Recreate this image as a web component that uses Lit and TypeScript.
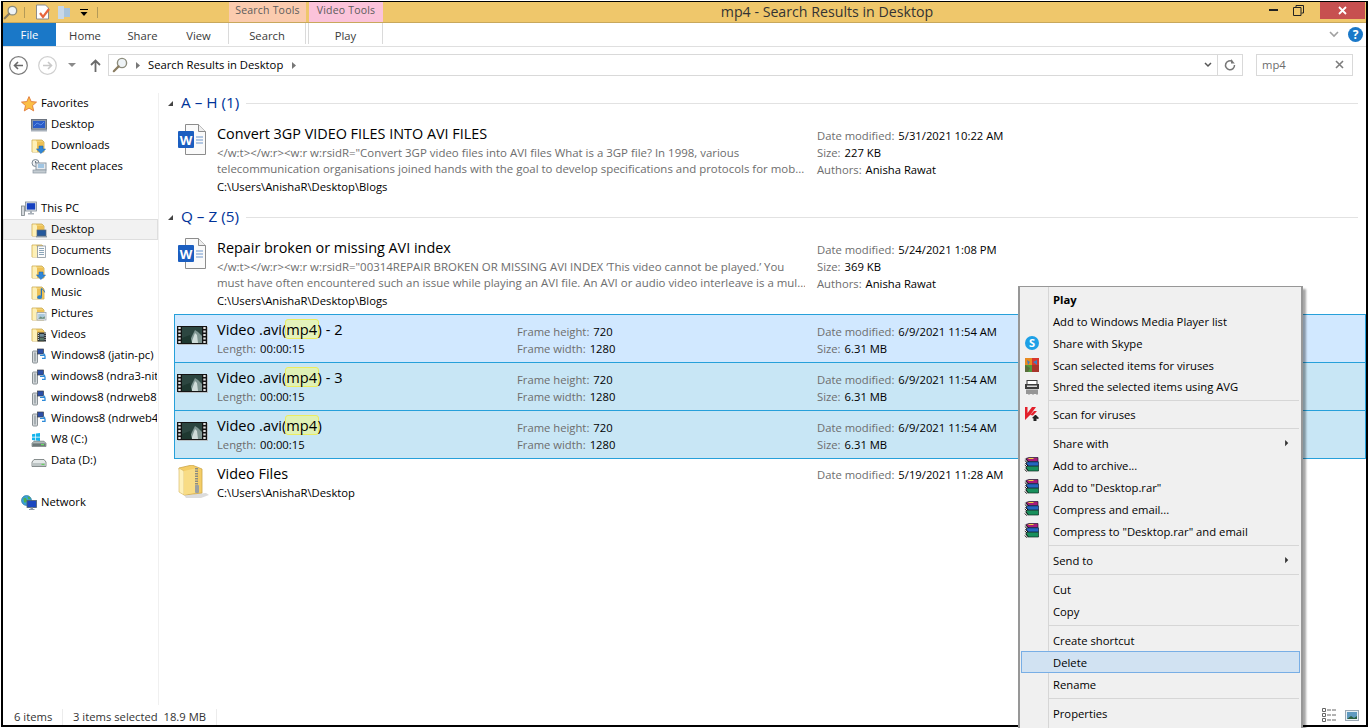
import { LitElement, html, css, svg } from 'lit';
import { customElement } from 'lit/decorators.js';

const glass = svg`<circle cx="10" cy="6" r="4.6" fill="#eef3f6" stroke="#8c8c7c" stroke-width="1.4"/><path d="M6.6 9.4 1.8 14.2" stroke="#8a7d62" stroke-width="2.2" stroke-linecap="round"/>`;
const folderBase = svg`<path d="M1 2h10l2 2v10H1z" fill="#f3d070" stroke="#c8a850" stroke-width=".8"/><path d="M1.500 2.500h3.500l1 1.500v10H1.500z" fill="#fdf0b8"/><path d="M6 4h6.600v9.600H6z" fill="#edc055"/>`;

const icons: Record<string, any> = {
  star: svg`<path d="M8 .6l2.200 5 5.300.5-4 3.500 1.200 5.300L8 12.100l-4.700 2.800 1.200-5.300-4-3.500 5.300-.5z" fill="#fbbf45" stroke="#e0783a" stroke-width=".9"/>`,
  laptop: svg`<rect x="0.500" y="2.500" width="15" height="10" fill="#8a96a6" stroke="#6c7480"/><rect x="2" y="4" width="12" height="7" fill="#2a5cc8"/><path d="M3 9l3-3 4 2 3-3" stroke="#5c8ee8" fill="none"/><rect x="0" y="12.500" width="16" height="2" fill="#a9b2bc"/>`,
  down: svg`${folderBase}<path d="M8 8h4v3h2.600L10 15.600 5.400 11H8z" fill="#2f86d8" stroke="#1a5ea8" stroke-width=".5"/>`,
  recent: svg`<circle cx="4.500" cy="4" r="3.500" fill="#eef0f2" stroke="#7c8894"/><path d="M4.500 2v2h2" stroke="#4c5864" fill="none" stroke-width=".8"/><rect x="5" y="4" width="10" height="7" fill="#e6eaee" stroke="#8a96a2"/><path d="M7 6h6M7 8h6" stroke="#5ba0d8"/><rect x="2" y="11" width="13" height="3" fill="#c4ccd2" stroke="#8a96a2" stroke-width=".7"/>`,
  pc: svg`<rect x="0.500" y="5" width="3" height="9.500" fill="#d4d8dc" stroke="#7c8488" stroke-width=".8"/><rect x="4.500" y="1" width="11" height="9" fill="#e4e8ec" stroke="#7c8894" stroke-width=".8"/><rect x="5.800" y="2.200" width="8.400" height="6.400" fill="#1440c0"/><path d="M9 10h2v2h2v1.400H7V12h2z" fill="#a8b0b8"/>`,
  fdesk: svg`${folderBase}<rect x="6" y="8" width="9" height="6" fill="#24589c" stroke="#5c6874" stroke-width=".7"/><rect x="5" y="14" width="11" height="1.400" fill="#8c98a4"/>`,
  fdocs: svg`${folderBase}<rect x="6.500" y="3" width="8" height="11.500" fill="#fbfbfb" stroke="#8a96a2" stroke-width=".8"/><path d="M8 5.500h5M8 7.500h5M8 9.500h5M8 11.500h5" stroke="#6f8fa8" stroke-width=".8"/>`,
  fmusic: svg`${folderBase}<path d="M10.400 3.500v8.300" stroke="#2570b8" stroke-width="1.200"/><ellipse cx="8.600" cy="12.200" rx="2.400" ry="1.900" fill="#2d80cc"/><path d="M10.600 3.600c1.600.8 2.800 2 3 3.800" stroke="#2570b8" fill="none"/>`,
  fpics: svg`${folderBase}<rect x="6" y="6.500" width="9" height="7.500" fill="#f4f6f8" stroke="#8c98a4" stroke-width=".7"/><rect x="7.200" y="7.800" width="6.600" height="5" fill="#a9c8dc"/><path d="M7.200 12.800l2.400-2.400 2 1.400 2.200-1.600v2.600z" fill="#6c8c78"/>`,
  fvids: svg`${folderBase}<rect x="6.500" y="5.500" width="8.500" height="9" fill="#2c3238"/><rect x="8.600" y="7" width="4.300" height="2.800" fill="#6d8b9a"/><rect x="8.600" y="10.600" width="4.300" height="2.800" fill="#5a7a6a"/><path d="M7.400 6v8M14.100 6v8" stroke="#d8dcdc" stroke-dasharray="1 1"/>`,
  netdrive: svg`<rect x="1.500" y="3" width="5" height="12" rx="1" fill="#d6dadc" stroke="#80888c" stroke-width=".9"/><rect x="3" y="4.500" width="2" height="9" fill="#a6aeb2"/><rect x="6.500" y="1" width="6" height="5" fill="#2b4fa8" stroke="#3a3f48" stroke-width=".7"/><path d="M9 7.400h5M14 7.400l-1.600-2M14 7.400v3h-3" stroke="#2d8ad8" stroke-width="1.300" fill="none"/>`,
  w8: svg`<path d="M1 2.200l3.300-.5v3H1zM5 1.600l4-.6v3.700H5zM1 5.400h3.300v3L1 8zM5 5.400h4v3.700l-4-.6z" fill="#14b4ec"/><path d="M1 11.200l2-2h10l2 2v3.300H1z" fill="#aeb8b8" stroke="#6c7474" stroke-width=".7"/><rect x="1.500" y="11.400" width="13" height="2.600" fill="#6c7878"/><rect x="10" y="12" width="3" height="1.200" fill="#64e060"/>`,
  drive: svg`<path d="M1 9l2-2.500h10L15 9v4.500H1z" fill="#e4e8e8" stroke="#6c7474" stroke-width=".8"/><rect x="1.500" y="10" width="13" height="3" fill="#bcc4c4"/><rect x="10.500" y="10.800" width="3" height="1.200" fill="#66d060"/>`,
  network: svg`<circle cx="5.500" cy="5.500" r="5" fill="#3aa0d8" stroke="#1e6c9c" stroke-width=".6"/><path d="M2.500 3c2-.8 3 .4 3.500 2S4.500 8 3 7.500zM6.500 1.500c2 0 3 1 3 2.500L7.500 4.500z" fill="#4cb050"/><rect x="6" y="5.500" width="9.500" height="7" fill="#1c48c0" stroke="#50606c" stroke-width=".8"/><path d="M9.500 12.500h2.500v1.500h1.500v1H8v-1h1.500z" fill="#8c98a4"/>`,
  skype: svg`<circle cx="8" cy="8" r="7" fill="#1ea0e6"/><text x="8" y="12" text-anchor="middle" font-size="11" font-weight="700" fill="#fff" font-family="Open Sans, sans-serif">S</text>`,
  avg: svg`<rect x="1" y="1" width="7" height="7" fill="#e88a20"/><rect x="8" y="1" width="7" height="7" fill="#d8372c"/><rect x="1" y="8" width="7" height="7" fill="#4f9a3c"/><rect x="8" y="8" width="7" height="7" fill="#a8352a"/><path d="M3 3l3 2-2 3zM9 5l4-2v5z" fill="#3f7ec0"/><path d="M1 8l5 3-2 4H1z" fill="#5a6e3c"/>`,
  shred: svg`<rect x="1" y="5" width="14" height="5" fill="#3c3c3c"/><rect x="3" y="1.500" width="10" height="4" fill="#fff" stroke="#3c3c3c"/><rect x="3" y="6.500" width="10" height="1.500" fill="#d8d8d8"/><path d="M3 10.500v4.500M5 10.500v5M7 10.500v4.500M9 10.500v5M11 10.500v4.500M13 10.500v5" stroke="#3c3c3c"/>`,
  kasp: svg`<path d="M1 1v13l5.500-5.500L12 1H8L3.500 7V1z" fill="#e3202c"/><path d="M6 9l4-4h3L9 9.500z" fill="#e3202c"/><path d="M8 12l3-3h1l3 3-1 1-1.500-.5V15h-3v-2.500z" fill="#222"/>`,
  rar: svg`<path d="M2 1.500l3-1h9v4H4z" fill="#a81c78" stroke="#20182c" stroke-width=".7"/><path d="M2 6l2-1.200h10.500v4.400H4z" fill="#2466c0" stroke="#101c38" stroke-width=".7"/><path d="M2 10.500l2-1.300h10.500v4.800H4z" fill="#18905c" stroke="#0c2c20" stroke-width=".7"/><path d="M1.500 1.800L4 4.500v-.5M1.500 6.200L4 9M1.500 10.700L4 13.500M.8 3.500L3 5.500M.8 8L3 10M.8 12.500L3 14.800" stroke="#000" stroke-width=".9" fill="none"/><path d="M4.500 1.500h5" stroke="#f0d040"/>`,
  arrow: svg`<path d="M5 3l5 5-5 5z" fill="#333"/>`,
};

const ic = (name: string, size = 16) =>
  html`<svg class="ic" width=${size} height=${size} viewBox="0 0 16 16">${icons[name]}</svg>`;

const wordIcon = html`<svg class="big" width="28" height="31" viewBox="0 0 28 31">
  <path d="M7.500.5h13l7 7v23h-20z" fill="#fafafa" stroke="#8c8c8c"/><path d="M20.500.5v7h7" fill="#eee" stroke="#8c8c8c"/>
  <rect x="0" y="7" width="16" height="17" rx="1" fill="#1b5ec0"/>
  <text x="8" y="20.500" text-anchor="middle" font-size="13" font-weight="700" fill="#fff" font-family="Open Sans, sans-serif">W</text>
  <path d="M18 13h7M18 16h7M18 19h7" stroke="#6d96cc"/></svg>`;

const filmIcon = html`<svg class="big" width="31" height="19" viewBox="0 0 31 19">
  <rect x="1" y="1" width="30" height="18" fill="#b8c0c4"/>
  <rect x="0" y="0" width="30" height="18" fill="#141414"/>
  <rect x="5" y="1" width="20" height="16" fill="#2c4640"/>
  <path d="M12 17l3-7 3-6 3 2 4 4v7z" fill="#7f9692"/><path d="M15 15l3-8 2 2 1 8h-6z" fill="#cfdcd9"/><path d="M5 12l8-3 2 8H5z" fill="#1e3830"/>
  <path d="M2.500 1v16M27.500 1v16" stroke="#e0e0e0" stroke-width="2.400" stroke-dasharray="2 1.500"/></svg>`;

const zipIcon = html`<svg class="big" width="32" height="33" viewBox="0 0 32 33">
  <path d="M6 30l22-2 3 2-8 3H8z" fill="#dcdcdc"/>
  <path d="M1 3l13-3 10 4v24L6 30z" fill="#f4cd66" stroke="#cca64a" stroke-width=".8"/>
  <path d="M1 3l5 3v24L1 27z" fill="#fdf1bc" stroke="#d6b458" stroke-width=".6"/>
  <path d="M6 6l13-3v24.500L6 30z" fill="#f8dc85"/>
  <path d="M18.500 3v25" stroke="#8c8c80" stroke-width="3" stroke-dasharray="1.500 1"/>
  <rect x="17" y="20" width="4" height="8" rx="1" fill="#9ca0a0"/></svg>`;

const menu = [
  { t: 'Play', b: true }, { t: 'Add to Windows Media Player list' }, { t: 'Share with Skype', i: 'skype' },
  { t: 'Scan selected items for viruses', i: 'avg' }, { t: 'Shred the selected items using AVG', i: 'shred', short: true }, -1,
  { t: 'Scan for viruses', i: 'kasp' }, 0, { t: 'Share with', sub: true },
  { t: 'Add to archive...', i: 'rar' }, { t: 'Add to "Desktop.rar"', i: 'rar' }, { t: 'Compress and email...', i: 'rar' },
  { t: 'Compress to "Desktop.rar" and email', i: 'rar' }, 0, { t: 'Send to', sub: true }, 0,
  { t: 'Cut' }, { t: 'Copy' }, 0, { t: 'Create shortcut' }, { t: 'Delete', hot: true }, { t: 'Rename' }, 0, { t: 'Properties' },
] as any[];

const navA = [['Desktop', 'laptop'], ['Downloads', 'down'], ['Recent places', 'recent']];
const navB = [['Desktop', 'fdesk', 1], ['Documents', 'fdocs'], ['Downloads', 'down'], ['Music', 'fmusic'], ['Pictures', 'fpics'], ['Videos', 'fvids'],
  ['Windows8 (jatin-pc)', 'netdrive'], ['windows8 (ndra3-nitin)', 'netdrive'], ['windows8 (ndrweb8)', 'netdrive'], ['Windows8 (ndrweb4)', 'netdrive'],
  ['W8 (C:)', 'w8'], ['Data (D:)', 'drive']] as any[];

@customElement('app-root')
export class AppRoot extends LitElement {
  static styles = css`
    :host { display: block; width: 1369px; height: 728px; overflow: hidden; position: relative; background: #fff;
      font-family: "Open Sans", sans-serif; font-size: 11.25px; color: #000; }
    * { box-sizing: border-box; }
    svg { display: block; flex: none; }
    .win { margin: 1px 0 0 1px; width: 1367px; height: 726px; border: solid #000; border-width: 1px 2px 2px 2px; display: flex; flex-direction: column; background: #fff; }

    .title { height: 21px; flex: none; background: #efc76b; border-bottom: 1px solid #c8a85c; display: flex; position: relative; }
    .qat { display: flex; align-items: center; height: 20px; width: 226px; }
    .qat .g { margin-left: 0; }
    .qsep { width: 1px; height: 11px; background: #b39a58; }
    .qs1 { margin-left: 6px; }
    .qs2 { margin-left: 9px; }
    .q1 { margin-left: 10px; }
    .q2 { margin-left: 6px; }
    .q3 { margin-left: 9px; }
    .ctx { height: 20px; text-align: center; line-height: 16px; color: #5b5b5b; font-size: 10.5px; letter-spacing: .2px; }
    .ctx.s { width: 77px; background: #fbcbae; margin-right: 3px; }
    .ctx.v { width: 74px; background: #fbc3da; }
    .cap { flex: 1; text-align: center; font-size: 14.2px; line-height: 19px; color: #333; padding-left: 10px; }
    .wbtns { display: flex; align-items: flex-start; height: 18px; }
    .close { width: 45px; height: 17px; background: #c75050; display: flex; align-items: center; justify-content: center; margin-left: 9px; margin-right: 1px; }
    .wb { width: 25px; height: 17px; display: flex; align-items: center; justify-content: center; }

    .tabs { height: 24px; flex: none; display: flex; border-bottom: 1px solid #dfdfdf; color: #3a3a3a; position: relative; }
    .file { width: 53px; height: 23px; background: #1a78c8; color: #fff; text-align: center; line-height: 23px; }
    .tab { text-align: center; line-height: 25px; }
    .t-home { width: 58px; }
    .t-share { width: 57px; }
    .t-view { width: 57px; padding-right: 2px; }
    .ctab { border: solid #dadada; border-width: 0 1px; height: 21px; line-height: 25px; text-align: center; }
    .t-search { width: 78px; }
    .t-play { width: 75px; margin-left: 2px; }
    .tail { flex: 1; display: flex; justify-content: flex-end; align-items: center; gap: 9px; padding-right: 3px; }
    .help { width: 15px; height: 15px; border-radius: 50%; background: #1a78c8; color: #fff; font-weight: 700; font-size: 12px; line-height: 15px; text-align: center; }

    .addr { height: 46px; flex: none; padding: 7px 0 0 0; display: flex; align-items: flex-start; color: #000; }
    .nav-btns { width: 105px; height: 22px; display: flex; align-items: center; padding-left: 6px; }
    .n1 { margin-left: 10px; }
    .n2 { margin-left: 11px; }
    .n3 { margin-left: 14px; }
    .abox { width: 1135px; height: 22px; border: 1px solid #d9d9d9; display: flex; align-items: center; }
    .crumb { flex: 1; display: flex; align-items: center; }
    .c1 { margin-left: 3px; }
    .c2 { margin-left: 8px; }
    .c3 { margin-left: 7px; margin-top: -2px; }
    .c4 { margin-left: 9px; }
    .chev { margin-right: 5px; }
    .acell { width: 25px; height: 20px; border-left: 1px solid #d9d9d9; display: flex; align-items: center; justify-content: center; }
    .sbox { width: 97px; height: 22px; margin-left: 13px; border: 1px solid #d9d9d9; display: flex; align-items: center; justify-content: space-between; padding: 0 8px 2px 5px; color: #6d6d6d; }

    .body { flex: 1; display: flex; min-height: 0; }
    .nav { width: 156px; flex: none; border-right: 1px solid #f0f0f0; }
    .nrow { height: 21px; display: flex; align-items: center; white-space: nowrap; overflow: hidden; padding-left: 27px; width: 155px; border: 1px solid transparent; }
    .nrow span { margin-top: -2px; }
    .nrow.top { padding-left: 17px; }
    .nrow.sel { background: #f2f2f2; border-color: #dedede; }
    .nrow .ic { margin-right: 4px; }
    .gap { height: 21px; }

    .main { flex: 1; padding-left: 15px; min-width: 0; }
    .ghead { height: 20px; display: flex; align-items: center; color: #003399; font-size: 15.3px; margin-right: 8px; margin-bottom: 9px; }
    .ghead i { width: 0; height: 0; border-style: solid; border-width: 0 0 5px 5px; border-color: transparent transparent #444 transparent; margin: 0 8px 0 -6px; }
    .ghead b { font-weight: 400; flex: none; margin-top: -2px; }
    .ghead u { flex: 1; height: 1px; background: #e2e2e2; margin-left: 7px; margin-top: 1px; }

    .item { display: flex; border: 1px solid transparent; }
    .iconc { width: 42px; flex: none; }
    .doc { height: 73px; margin-bottom: 12px; }
    .doc.last { margin-bottom: 5px; }
    .doc .big { margin: 1px 0 0 3px; }
    .doc .name { height: 21px; line-height: 22px; margin-bottom: 1px; }
    .vid { height: 49px; margin-top: -1px; background: #c8e6f5; border-color: #26a0da; position: relative; }
    .vid.first { background: #d1e8ff; margin-top: 0; }
    .vid .big { margin: 11px 0 0 2px; }
    .zip { height: 40px; margin-top: -1px; }
    .zip .big { margin: 6px 0 0 3px; }
    .col { width: 300px; flex: none; white-space: nowrap; }
    .col.wide { width: 600px; }
    .name { font-size: 14.4px; line-height: 20px; height: 20px; }
    .snip { width: 588px; height: 16px; line-height: 16px; font-size: 11.45px; color: #6d6d6d; overflow: hidden; white-space: nowrap; }
    .path { line-height: 18px; margin-top: 1px; }
    .line { height: 17px; line-height: 17px; }
    .lab { color: #6d6d6d; margin-right: 4px; }
    .props { padding-top: 4px; }
    .vid .name { margin-top: 4px; font-size: 14.6px; }
    .vid .name + .line { margin-top: 1px; }
    .vid .props { padding-top: 8px; }
    .zip .name { margin-top: 5px; }
    .zip .path { margin-top: 0; }
    .zip .props { padding-top: 7px; }
    mark { background: rgba(248, 252, 120, .5); border: 1px solid #ecec60; border-radius: 3px; color: inherit; margin: 0 -1px; padding: 0 .5px 0 0; display: inline-block; height: 20px; line-height: 18px; }

    .status { height: 20px; flex: none; display: flex; align-items: center; color: #333; position: relative; }
    .st { border-right: 1px solid #ececec; height: 16px; line-height: 16px; margin-top: 3px; }
    .st1 { width: 60px; padding-left: 11px; }
    .st2 { width: 154px; padding-left: 10px; }
    .spacer { flex: 1; }
    .v1 { margin-right: 8px; }
    .v2 { margin-right: 7px; }

    .menu { position: absolute; left: 1018px; top: 286px; width: 285px; height: 450px; background: #f0f0f0; border: 1px solid #979797; border-width: 1px 2px 1px 2px; box-shadow: 3px 3px 2px rgba(0,0,0,.35); padding: 1px 1px 0 1px; }
    .gutter { position: absolute; left: 28px; top: 0; bottom: 0; width: 1px; background: #d6d6d6; }
    .mi { height: 22px; display: flex; align-items: center; position: relative; border: 1px solid transparent; }
    .mi.short { height: 21px; }
    .mi.b { font-weight: 700; }
    .mi.hot { background: #d1e2f2; border-color: #78aee5; }
    .mi .mic { width: 31px; height: 16px; padding-left: 2px; flex: none; }
    .mi .arr { position: absolute; right: 7px; top: 5px; }
    .msep { height: 1px; margin: 3px 1px 3px 28px; background: #d6d6d6; }
    .msep.tight { margin-bottom: 2px; }
  `;

  private _props(rows: [string, string][]) {
    return html`<div class="col props">${rows.map(r => html`<div class="line"><span class="lab">${r[0]}</span>${r[1]}</div>`)}</div>`;
  }

  private _doc(title: string, a: string, b: string, date: string, size: string, last = false) {
    return html`<div class="item doc ${last ? 'last' : ''}">
      <div class="iconc">${wordIcon}</div>
      <div class="col wide">
        <div class="name">${title}</div>
        <div class="snip">${a}</div>
        <div class="snip">${b}</div>
        <div class="path">C:\\Users\\AnishaR\\Desktop\\Blogs</div>
      </div>
      ${this._props([['Date modified:', date], ['Size:', size], ['Authors:', 'Anisha Rawat']])}
    </div>`;
  }

  private _vid(suffix: string, first = false) {
    return html`<div class="item vid ${first ? 'first' : ''}">
      <div class="iconc">${filmIcon}</div>
      <div class="col">
        <div class="name">Video .avi(<mark>mp4</mark>)${suffix}</div>
        <div class="line"><span class="lab">Length:</span>00:00:15</div>
      </div>
      ${this._props([['Frame height:', '720'], ['Frame width:', '1280']])}
      ${this._props([['Date modified:', '6/9/2021 11:54 AM'], ['Size:', '6.31 MB']])}
    </div>`;
  }

  private _menuRow(m: any) {
    if (m === 0) return html`<div class="msep"></div>`;
    if (m === -1) return html`<div class="msep tight"></div>`;
    return html`<div class="mi ${m.b ? 'b' : ''} ${m.hot ? 'hot' : ''} ${m.short ? 'short' : ''}">
      <div class="mic">${m.i ? ic(m.i) : ''}</div>${m.t}
      ${m.sub ? html`<svg class="arr" width="10" height="10" viewBox="0 0 16 16">${icons.arrow}</svg>` : ''}
    </div>`;
  }

  render() {
    return html`<div class="win">
      <div class="title">
        <div class="qat">
          <svg class="g" width="15" height="15" viewBox="0 0 16 16">${glass}</svg>
          <div class="qsep qs1"></div>
          <svg class="q1" width="16" height="16" viewBox="0 0 16 16"><path d="M1.500 1h9l3 3v11h-12z" fill="#fff" stroke="#8c8c8c"/><path d="M5 9l3 4 6-8" stroke="#e8663c" stroke-width="2.200" fill="none"/></svg>
          <svg class="q2" width="14" height="15" viewBox="0 0 14 15"><path d="M1 1h6v13H1z" fill="#c8d8e8"/><path d="M7 3h6v9H7z" fill="#a8c4dc"/></svg>
          <svg class="q3" width="8" height="7" viewBox="0 0 8 7"><path d="M0 0h8v1H0zM.5 3h7L4 7z" fill="#000"/></svg>
          <div class="qsep qs2"></div>
        </div>
        <div class="ctx s">Search Tools</div>
        <div class="ctx v">Video Tools</div>
        <div class="cap">mp4 - Search Results in Desktop</div>
        <div class="wbtns">
          <div class="wb"><svg width="9" height="3" viewBox="0 0 9 3"><rect y="0" width="9" height="2" fill="#222"/></svg></div>
          <div class="wb"><svg width="11" height="11" viewBox="0 0 11 11"><path d="M3 2.500V.5h7.500V8H8.500M.5 2.500H8V10.500H.5z" fill="none" stroke="#222"/></svg></div>
          <div class="close"><svg width="9" height="9" viewBox="0 0 9 9"><path d="M1 1l7 7M8 1L1 8" stroke="#fff" stroke-width="1.800"/></svg></div>
        </div>
      </div>

      <div class="tabs">
        <div class="file">File</div>
        <div class="tab t-home">Home</div>
        <div class="tab t-share">Share</div>
        <div class="tab t-view">View</div>
        <div class="ctab t-search">Search</div>
        <div class="ctab t-play">Play</div>
        <div class="tail">
          <svg width="10" height="7" viewBox="0 0 10 7"><path d="M1 1l4 4 4-4" fill="none" stroke="#a0a0a0" stroke-width="1.600"/></svg>
          <div class="help">?</div>
        </div>
      </div>

      <div class="addr">
        <div class="nav-btns">
          <svg width="19" height="19" viewBox="0 0 19 19"><circle cx="9.500" cy="9.500" r="8.800" fill="#fff" stroke="#7c7c7c" stroke-width="1.200"/><path d="M14 9.500H6M9 6L5.500 9.500 9 13" fill="none" stroke="#6a6a6a" stroke-width="1.600"/></svg>
          <svg class="n1" width="19" height="19" viewBox="0 0 19 19"><circle cx="9.500" cy="9.500" r="8.800" fill="#fff" stroke="#d0d0d0" stroke-width="1.200"/><path d="M5 9.500h8M10 6l3.500 3.500L10 13" fill="none" stroke="#c8c8c8" stroke-width="1.600"/></svg>
          <svg class="n2" width="8" height="4" viewBox="0 0 8 4"><path d="M0 0h8L4 4z" fill="#8a8a8a"/></svg>
          <svg class="n3" width="11" height="13" viewBox="0 0 11 13"><path d="M5.500 13V2M1 6l4.500-4.500L10 6" fill="none" stroke="#6a6a6a" stroke-width="1.800"/></svg>
        </div>
        <div class="abox">
          <div class="crumb">
            <svg class="c1" width="16" height="16" viewBox="0 0 16 16">${glass}</svg>
            <svg class="c2" width="5" height="7" viewBox="0 0 5 7"><path d="M0 0l4 3.500L0 7z" fill="#777"/></svg>
            <span class="c3">Search Results in Desktop</span>
            <svg class="c4" width="5" height="7" viewBox="0 0 5 7"><path d="M0 0l4 3.500L0 7z" fill="#777"/></svg>
          </div>
          <svg class="chev" width="8" height="6" viewBox="0 0 8 6"><path d="M1 1l3 3 3-3" fill="none" stroke="#555" stroke-width="1.500"/></svg>
          <div class="acell"><svg width="12" height="12" viewBox="0 0 12 12"><path d="M8.500 2.500A4.500 4.500 0 1 0 10.500 6" fill="none" stroke="#777" stroke-width="1.500"/><path d="M7 0v4.500h3.800z" fill="#777"/></svg></div>
        </div>
        <div class="sbox">mp4<svg width="9" height="9" viewBox="0 0 9 9"><path d="M1 1l7 7M8 1L1 8" stroke="#7c7c7c" stroke-width="1.600"/></svg></div>
      </div>

      <div class="body">
        <div class="nav">
          <div class="nrow top">${ic('star')}<span>Favorites</span></div>
          ${navA.map(n => html`<div class="nrow">${ic(n[1])}<span>${n[0]}</span></div>`)}
          <div class="gap"></div>
          <div class="nrow top">${ic('pc')}<span>This PC</span></div>
          ${navB.map(n => html`<div class="nrow ${n[2] ? 'sel' : ''}">${ic(n[1])}<span>${n[0]}</span></div>`)}
          <div class="gap"></div>
          <div class="nrow top">${ic('network')}<span>Network</span></div>
        </div>
        <div class="main">
          <div class="ghead"><i></i><b>A – H (1)</b><u></u></div>
          ${this._doc('Convert 3GP VIDEO FILES INTO AVI FILES',
            '</w:t></w:r><w:r w:rsidR="Convert 3GP video files into AVI files What is a 3GP file? In 1998, various',
            'telecommunication organisations joined hands with the goal to develop specifications and protocols for mob...',
            '5/31/2021 10:22 AM', '227 KB')}
          <div class="ghead"><i></i><b>Q – Z (5)</b><u></u></div>
          ${this._doc('Repair broken or missing AVI index',
            '</w:t></w:r><w:r w:rsidR="00314REPAIR BROKEN OR MISSING AVI INDEX ‘This video cannot be played.’ You',
            'must have often encountered such an issue while playing an AVI file. An AVI or audio video interleave is a mul...',
            '5/24/2021 1:08 PM', '369 KB', true)}
          ${this._vid(' - 2', true)}
          ${this._vid(' - 3')}
          ${this._vid('')}
          <div class="item zip">
            <div class="iconc">${zipIcon}</div>
            <div class="col wide"><div class="name">Video Files</div><div class="path">C:\\Users\\AnishaR\\Desktop</div></div>
            ${this._props([['Date modified:', '5/19/2021 11:28 AM']])}
          </div>
        </div>
      </div>

      <div class="status">
        <div class="st st1">6 items</div>
        <div class="st st2">3 items selected&nbsp; 18.9 MB</div>
        <div class="spacer"></div>
        <svg class="v1" width="15" height="14" viewBox="0 0 15 14"><path d="M.5.5h3v3h-3zM.5 5.500h3v3h-3zM.5 10.500h3v3h-3z" fill="none" stroke="#666"/><path d="M5 2h4M10 2h4M5 7h4M10 7h4M5 12h4M10 12h4" stroke="#666"/></svg>
        <svg class="v2" width="14" height="11" viewBox="0 0 14 11"><rect x=".5" y=".5" width="13" height="10" fill="#e8f0f4" stroke="#9aa8b4"/><rect x="2" y="2" width="10" height="7" fill="#5f9ac0"/><path d="M2 9l4-3 3 2 3-2v3z" fill="#2a6040"/></svg>
      </div>

      <div class="menu">
        <div class="gutter"></div>
        ${menu.map(m => this._menuRow(m))}
      </div>
    </div>`;
  }
}
